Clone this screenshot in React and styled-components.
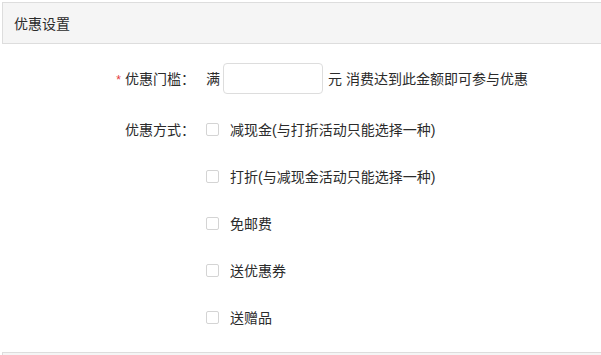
import styled, { createGlobalStyle } from 'styled-components';

const GlobalStyle = createGlobalStyle`
  html, body {
    margin: 0;
    padding: 0;
    background: #fff;
  }
  body {
    font-family: "Liberation Sans", "Noto Sans CJK SC", sans-serif;
    color: #333;
  }
`;

const Page = styled.div`
  width: 601px;
  height: 355px;
  overflow: hidden;
  padding: 2px 0 0 2px;
  box-sizing: border-box;
`;

const PanelHeader = styled.div`
  height: 40px;
  display: flex;
  align-items: center;
  padding-left: 11px;
  background: #f5f5f5;
  border: 1px solid #ddd;
  border-right: none;
  font-size: 14px;
  color: #2b2b2b;
`;

const Form = styled.div`
  display: flex;
  flex-direction: column;
  padding-top: 19px;
  height: 289px;
`;

const Row = styled.div`
  display: flex;
  align-items: center;
  height: 30px;
  margin-bottom: ${(props) => props.$gap || 17}px;
  font-size: 14px;
  color: #2b2b2b;
`;

const Label = styled.div`
  width: 193px;
  flex: 0 0 auto;
  text-align: right;
  padding-right: 11px;
`;

const Star = styled.span`
  color: #e4393c;
  margin-right: 4px;
  font-size: 12px;
`;

const AmountInput = styled.input`
  width: 100px;
  height: 31px;
  box-sizing: border-box;
  border: 1px solid #ddd;
  border-radius: 4px;
  margin: 0 5px 0 3px;
  outline: none;
`;

const Check = styled.span`
  width: 13px;
  height: 13px;
  box-sizing: border-box;
  border: 1px solid #d4d4d4;
  border-radius: 2px;
  background: #fff;
  margin-right: 11px;
  flex: 0 0 auto;
`;

const Option = styled.div`
  display: flex;
  align-items: center;
`;

const NextHeader = styled.div`
  height: 10px;
  background: #f5f5f5;
  border-top: 1px solid #ddd;
  border-left: 1px solid #ddd;
`;

const options = [
  '减现金(与打折活动只能选择一种)',
  '打折(与减现金活动只能选择一种)',
  '免邮费',
  '送优惠券',
  '送赠品',
];

const App = () => (
  <Page>
    <GlobalStyle />
    <PanelHeader>优惠设置</PanelHeader>
    <Form>
      <Row $gap={21}>
        <Label><Star>*</Star>优惠门槛：</Label>
        <span>满</span>
        <AmountInput />
        <span>元 消费达到此金额即可参与优惠</span>
      </Row>
      {options.map((o, i) => (
        <Row key={i} $gap={i === options.length - 1 ? 0 : 17}>
          <Label>{i === 0 ? '优惠方式：' : ''}</Label>
          <Option>
            <Check />
            {o}
          </Option>
        </Row>
      ))}
    </Form>
    <NextHeader />
  </Page>
);

export default App;
